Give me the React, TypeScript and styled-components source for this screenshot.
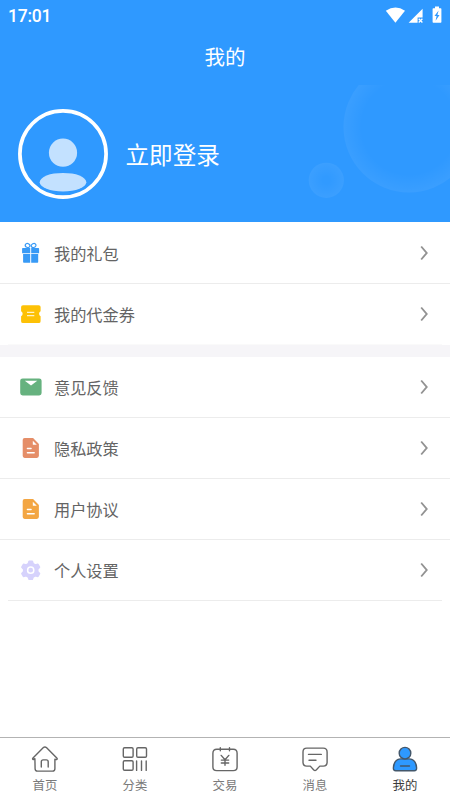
import React from 'react';
import styled, { createGlobalStyle } from 'styled-components';

const GlobalStyle = createGlobalStyle`
  * { box-sizing: border-box; }
  body {
    margin: 0;
    background: #fff;
    font-family: Roboto, "Noto Sans CJK SC", sans-serif;
  }
`;

const Screen = styled.div`
  width: 450px;
  height: 800px;
  display: flex;
  flex-direction: column;
  background: #fff;
  overflow: hidden;
`;

const Header = styled.header`
  position: relative;
  height: 222px;
  flex: none;
  background: #2f99ff;
  color: #fff;
`;

const Bubbles = styled.svg`
  position: absolute;
  right: 0;
  bottom: 0;
  width: 160px;
  height: 137px;
`;

const StatusBar = styled.div`
  height: 32px;
  padding: 0 8px;
  display: flex;
  align-items: center;
  justify-content: space-between;
`;

const Clock = styled.span`
  font-size: 17.5px;
  font-weight: 500;
  line-height: 32px;
  letter-spacing: -0.25px;
`;

const StatusIcons = styled.svg`
  width: 58px;
  height: 20px;
`;

const Title = styled.h1`
  margin: 0;
  height: 50px;
  padding-top: 1px;
  line-height: 50px;
  text-align: center;
  font-size: 20.5px;
  font-weight: 400;
`;

const Profile = styled.div`
  display: flex;
  align-items: center;
  gap: 18px;
  padding: 27px 0 0 17.5px;
`;

const Avatar = styled.svg`
  width: 90px;
  height: 90px;
`;

const Login = styled.span`
  padding-top: 3px;
  font-size: 23.6px;
  line-height: 32px;
`;

const Menu = styled.main`
  flex: 1;
  padding-top: 1px;
`;

const Row = styled.div<{ $line: 'full' | 'inset' | 'faint' }>`
  height: 61px;
  padding: 0 21px 2px 20px;
  display: flex;
  align-items: center;
  background-image: linear-gradient(${p => (p.$line === 'faint' ? '#fafafa, #fafafa' : '#ececec, #ececec')});
  background-repeat: no-repeat;
  background-size: ${p => (p.$line === 'full' ? '100%' : 'calc(100% - 16px)')} 1px;
  background-position: center bottom;
`;

const RowIcon = styled.svg`
  width: 22px;
  height: 22px;
  flex: none;
`;

const RowLabel = styled.span`
  flex: 1;
  margin-left: 12px;
  padding-top: 4px;
  font-size: 16.2px;
  line-height: 24px;
  color: #646464;
`;

const Chevron = styled.svg`
  width: 10px;
  height: 16px;
`;

const Divider = styled.div`
  height: 12px;
  background: #f6f5f8;
`;

const TabBar = styled.nav`
  height: 63px;
  flex: none;
  display: grid;
  grid-template-columns: repeat(5, 1fr);
  border-top: 1px solid #b3b3b3;
`;

const Tab = styled.div<{ $active?: boolean }>`
  display: flex;
  flex-direction: column;
  align-items: center;
  padding-top: 7px;
  gap: 4px;
  font-size: 12.4px;
  line-height: 18px;
  color: ${p => (p.$active ? '#3a3a3a' : '#7a7a7a')};
`;

const TabIcon = styled.svg`
  width: 28px;
  height: 28px;
  fill: none;
  stroke: #666;
  stroke-width: 1.4;
  stroke-linecap: round;
  stroke-linejoin: round;
`;

const GiftIcon = () => (
  <RowIcon viewBox="0 0 22 22">
    <g fill="none" stroke="#389af6" strokeWidth="1.2">
      <ellipse cx="7.6" cy="3.5" rx="2.4" ry="2" transform="rotate(25 7.6 3.5)" />
      <ellipse cx="13.6" cy="3.5" rx="2.4" ry="2" transform="rotate(-25 13.6 3.5)" />
    </g>
    <path fill="#389af6" d="M2.7 6.1h7.5v5.2H2.1V6.7q0-.6.6-.6ZM11.2 6.1h7.2q.7 0 .7.6v4.6h-7.9ZM3.1 11.9h7.1v8.8H3.8q-.7 0-.7-.7ZM11.2 11.9h7V20q0 .7-.7.7h-6.3Z" />
  </RowIcon>
);

const TicketIcon = () => (
  <RowIcon viewBox="0 0 22 22">
    <path fill="#fdc106" d="M3 2.2h15.7q1.9 0 1.9 1.9v4.2a2.8 2.8 0 0 0 0 5v4.9q0 1.9-1.9 1.9H3q-1.9 0-1.9-1.9v-4.9a2.8 2.8 0 0 0 0-5V4.1q0-1.9 1.9-1.9Z" />
    <path stroke="#fff3c8" strokeWidth="1.3" d="M7 9.3h7.3M7 12.6h7.3" />
  </RowIcon>
);

const MailIcon = () => (
  <RowIcon viewBox="0 0 22 22">
    <rect x=".2" y="2.4" width="21.4" height="17" rx="2.4" fill="#66b27f" />
    <path d="M4.8 4.7h12.5L11 9.4Z" fill="#fff" />
  </RowIcon>
);

const DocumentIcon = ({ color }: { color: string }) => (
  <RowIcon viewBox="0 0 22 22">
    <path fill={color} d="M4.6 1h8.5l5.8 6v11.8q0 2.1-2.1 2.1H4.6q-1.9 0-1.9-2.1V3Q2.7 1 4.6 1Z" />
    <path fill="#fff" d="M12.8 3.7v4h4Z" />
    <path stroke="#fff" strokeWidth="1.4" strokeLinecap="round" d="M7.4 11.5h3.7M7.4 15.7h6.8" />
  </RowIcon>
);

const GearIcon = () => (
  <RowIcon viewBox="0 0 22 22">
    <path
      fill="#d6d2fc"
      stroke="#d6d2fc"
      strokeWidth="1.6"
      strokeLinejoin="round"
      d="M9.1 2.2h3.2l.8 2.6 2.1 1.2 2.7-.6 1.6 2.8-1.8 2v2.4l1.8 2-1.6 2.8-2.7-.6-2.1 1.2-.8 2.3H9.1L8.3 18l-2.1-1.2-2.7.6-1.6-2.8 1.8-2v-2.4l-1.8-2 1.6-2.8 2.7.6 2.1-1.2Z"
    />
    <circle cx="10.7" cy="11.2" r="3.1" fill="#d6d2fc" stroke="#fff" strokeWidth="1.5" />
  </RowIcon>
);

interface ItemProps {
  icon: React.ReactNode;
  label: string;
  line?: 'full' | 'inset' | 'faint';
}

const MenuItem = ({ icon, label, line = 'full' }: ItemProps) => (
  <Row $line={line}>
    {icon}
    <RowLabel>{label}</RowLabel>
    <Chevron viewBox="0 0 10 16" fill="none" stroke="#929292" strokeWidth="1.9">
      <path d="M2.2 1.5 7.7 8l-5.5 6.5" />
    </Chevron>
  </Row>
);

export default function App() {
  return (
    <Screen>
      <GlobalStyle />
      <Header>
        <Bubbles viewBox="290 85 160 137">
          <defs>
            <radialGradient id="large">
              <stop offset=".72" stopColor="#fff" stopOpacity="0" />
              <stop offset="1" stopColor="#fff" stopOpacity=".055" />
            </radialGradient>
            <radialGradient id="small">
              <stop offset=".2" stopColor="#fff" stopOpacity=".01" />
              <stop offset="1" stopColor="#fff" stopOpacity=".06" />
            </radialGradient>
          </defs>
          <circle cx="409" cy="127" r="65.5" fill="url(#large)" />
          <circle cx="326.3" cy="180.3" r="17.6" fill="url(#small)" />
        </Bubbles>
        <StatusBar>
          <Clock>17:01</Clock>
          <StatusIcons viewBox="384 6 58 20" fill="#fff">
            <path d="M385.8 10.8q9.8-6.8 19.2 0L395.4 22.8Z" />
            <path d="M422.6 8.8v8.7h-5v5.2h-9Z" />
            <path d="m418.7 18.8 3.7 3.7m0-3.7-3.7 3.7" stroke="#fff" strokeWidth="1.3" />
            <path d="M435 6.5h4v1.8h1.7q.7 0 .7.7v13q0 .7-.7.7h-7.4q-.7 0-.7-.7V9q0-.7.7-.7h1.7Z" />
            <path fill="#2f99ff" d="M438.6 10.5 434.5 16h2.1l-1 4.7 3.9-5.7h-2.1Z" />
          </StatusIcons>
        </StatusBar>
        <Title>我的</Title>
        <Profile>
          <Avatar viewBox="0 0 90 90">
            <circle cx="45" cy="45" r="43.1" fill="none" stroke="#fff" strokeWidth="3.7" />
            <circle cx="45" cy="43.7" r="14.1" fill="#c3e1ff" />
            <ellipse cx="45" cy="73.2" rx="23.3" ry="9.3" fill="#c3e1ff" />
          </Avatar>
          <Login>立即登录</Login>
        </Profile>
      </Header>
      <Menu>
        <MenuItem icon={<GiftIcon />} label="我的礼包" />
        <MenuItem icon={<TicketIcon />} label="我的代金券" line="faint" />
        <Divider />
        <MenuItem icon={<MailIcon />} label="意见反馈" />
        <MenuItem icon={<DocumentIcon color="#e58e68" />} label="隐私政策" />
        <MenuItem icon={<DocumentIcon color="#f3a643" />} label="用户协议" />
        <MenuItem icon={<GearIcon />} label="个人设置" line="inset" />
      </Menu>
      <TabBar>
        <Tab>
          <TabIcon viewBox="0 0 28 28">
            <path d="M3.9 13.7 2.3 14.6Q1 14 2 12.9L12.4 2.6q1.5-1.4 3 0L25.8 12.9q1 1.1-.3 1.7l-1.6-.3v9.4q0 2.4-2.4 2.4H6.5q-2.4 0-2.4-2.4ZM10.3 22v-5.2q0-1.9 1.9-1.9h3.1q1.9 0 1.9 1.9V22" />
          </TabIcon>
          首页
        </Tab>
        <Tab>
          <TabIcon viewBox="0 0 28 28">
            <rect x="2.3" y="2.7" width="9.8" height="9.5" rx="1.3" />
            <rect x="15.7" y="2.7" width="9.8" height="9.5" rx="1.3" />
            <rect x="2.3" y="15.8" width="9.8" height="9.5" rx="1.3" />
            <path d="M15.6 15.9v9.5M20.5 15.9v9.5M25.2 15.9v9.5" />
          </TabIcon>
          分类
        </Tab>
        <Tab>
          <TabIcon viewBox="0 0 28 28">
            <path d="M6.8 4.3h-1Q1.9 4.3 1.9 8.2v13.7q0 3.7 3.8 3.7h16.6q3.8 0 3.8-3.7V8.2q0-3.9-3.8-3.9h-.8M6.8 4.3h14.7M9.3 2.7v3.1M18.5 2.7v3.1" />
            <path d="m10.2 10.4 3.8 4.4 3.8-4.4M10.3 15.1h7.4M10.3 18h7.4M14 14.9v5.4" />
          </TabIcon>
          交易
        </Tab>
        <Tab>
          <TabIcon viewBox="0 0 28 28">
            <path d="M5.8 3.1h16.4q3.9 0 3.9 3.9v10.3q0 3.8-3.9 3.8h-3.4L15.2 25q-1.2 1.1-2.4 0l-3.5-3.9H5.8Q2 21.1 2 17.3V7q0-3.9 3.8-3.9ZM7.5 9.4h12.8M8 15.2h7" />
          </TabIcon>
          消息
        </Tab>
        <Tab $active>
          <TabIcon viewBox="0 0 28 28">
            <g fill="#2e99ff" stroke="#43576b">
              <path d="M2.4 22.8q.5-8.2 7-8.9h9.1q6.6.7 7.1 8.9.2 3-2.4 3H4.8q-2.6 0-2.4-3Z" />
              <circle cx="14" cy="8.2" r="5.8" />
            </g>
            <path d="M9.5 21h9" stroke="#43576b" />
          </TabIcon>
          我的
        </Tab>
      </TabBar>
    </Screen>
  );
}
